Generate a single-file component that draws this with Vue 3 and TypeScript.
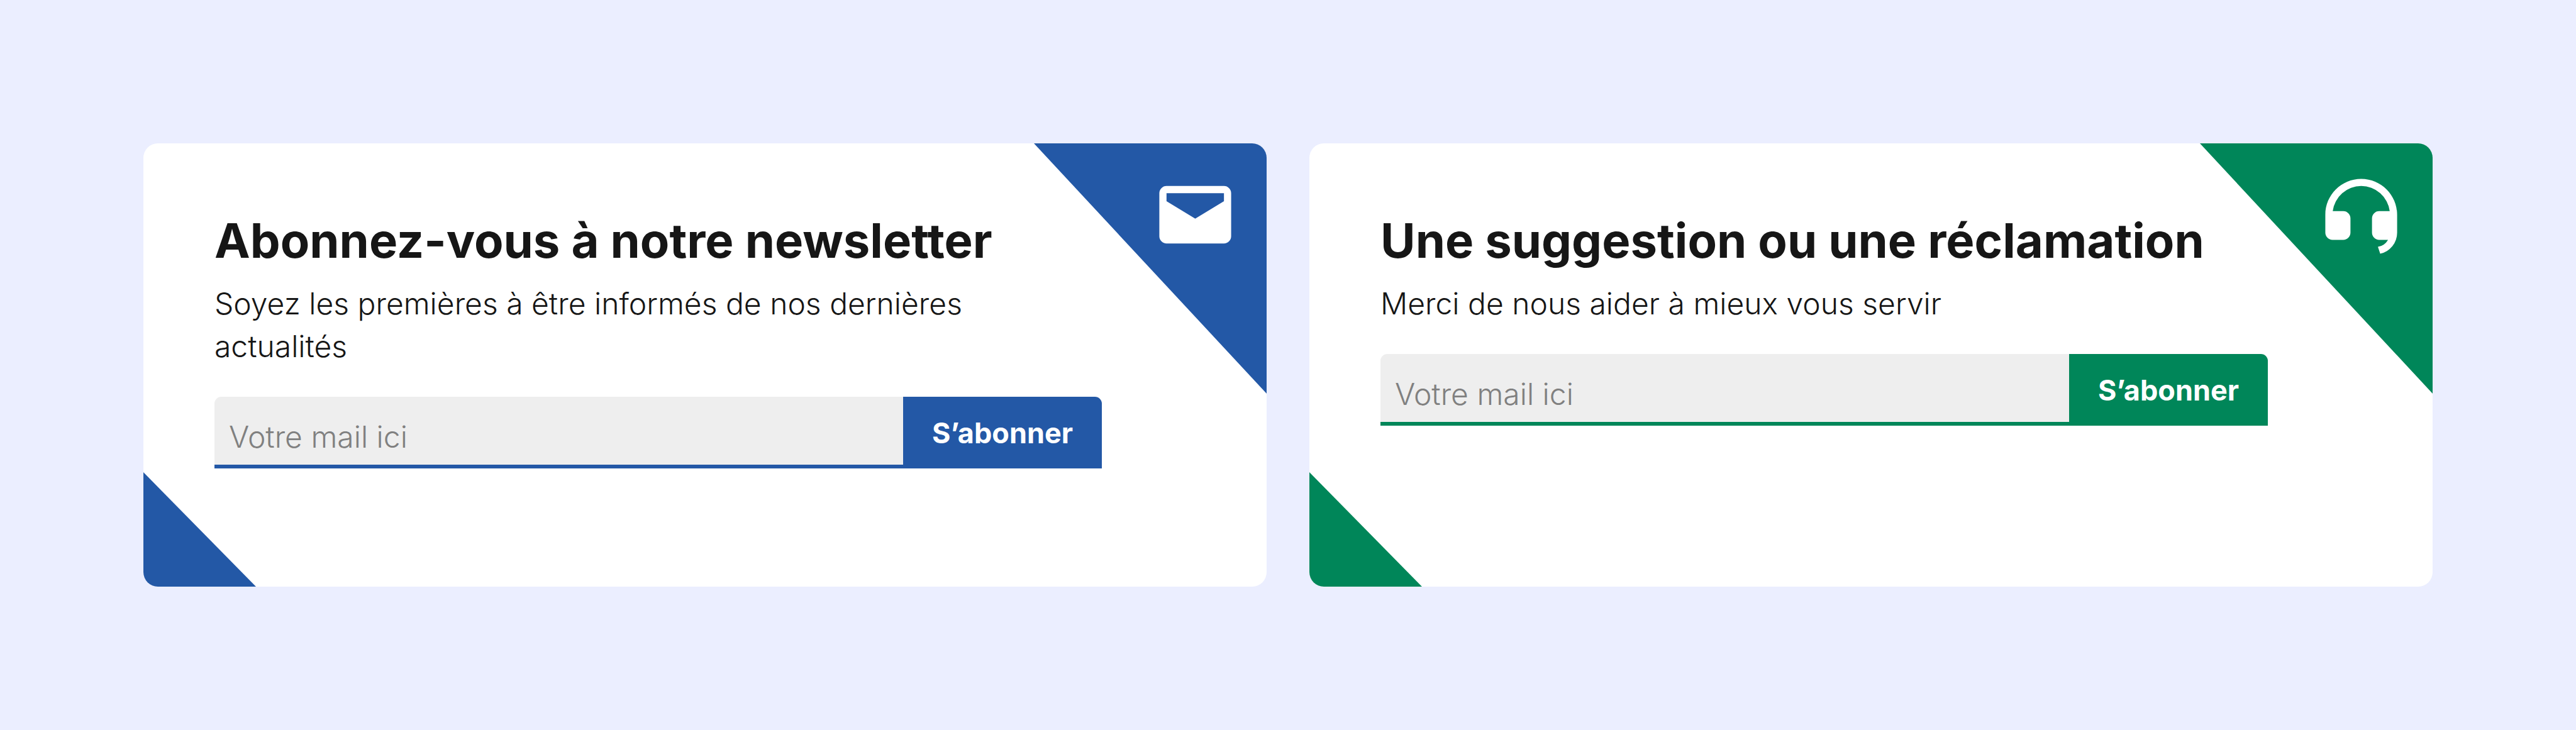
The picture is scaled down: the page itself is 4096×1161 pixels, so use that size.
<script setup lang="ts">
import { ref } from 'vue'

interface Panel {
  id: string
  title: string
  text: string
  icon: string
}

const panels: Panel[] = [
  {
    id: 'newsletter',
    title: 'Abonnez-vous à notre newsletter',
    text: 'Soyez les premières à être informés de nos dernières actualités',
    icon: 'M4 4h16a2 2 0 0 1 2 2v12a2 2 0 0 1-2 2H4a2 2 0 0 1-2-2V6a2 2 0 0 1 2-2zM4 6v2.24l8 4.86 8-4.86V6z',
  },
  {
    id: 'suggestion',
    title: 'Une suggestion ou une réclamation',
    text: 'Merci de nous aider à mieux vous servir',
    icon: 'M22 17.002a6.002 6.002 0 0 1-4.713 5.86l-.638-1.914A4.003 4.003 0 0 0 19.465 19H17a2 2 0 0 1-2-2v-4a2 2 0 0 1 2-2h2.938a8.001 8.001 0 0 0-15.876 0H7a2 2 0 0 1 2 2v4a2 2 0 0 1-2 2H4a2 2 0 0 1-2-2v-5C2 6.477 6.477 2 12 2s10 4.477 10 10v5.002z',
  },
]

const emails = ref<Record<string, string>>({ newsletter: '', suggestion: '' })
</script>

<template>
  <main class="page">
    <section v-for="panel in panels" :key="panel.id" class="card" :class="panel.id">
      <div class="corner corner-top"></div>
      <div class="corner corner-bottom"></div>
      <svg class="icon" viewBox="0 0 24 24" aria-hidden="true">
        <path fill="currentColor" fill-rule="evenodd" :d="panel.icon" />
      </svg>
      <h2 class="title">{{ panel.title }}</h2>
      <p class="text">{{ panel.text }}</p>
      <form class="form" @submit.prevent>
        <input
          v-model="emails[panel.id]"
          class="field"
          type="email"
          aria-label="Votre mail ici"
          placeholder="Votre mail ici"
        />
        <button class="submit" type="submit">S’abonner</button>
      </form>
    </section>
  </main>
</template>

<style>
body {
  margin: 0;
  background: #ebeeff;
}
</style>

<style scoped>
.page {
  display: grid;
  grid-template-columns: 1fr 1fr;
  gap: 68px;
  padding: 228px;
  font-family: Inter, "Open Sans", sans-serif;
  color: #161616;
}

.card {
  position: relative;
  box-sizing: border-box;
  padding: 108px 262px 188px 113px;
  border-radius: 23px;
  overflow: hidden;
  background: #fff;
}

.newsletter {
  --accent: #2358a6;
}

.suggestion {
  --accent: #008659;
}

.corner {
  position: absolute;
  background: var(--accent);
}

.corner-top {
  top: 0;
  right: 0;
  width: 370px;
  height: 398px;
  clip-path: polygon(0 0, 100% 0, 100% 100%);
}

.corner-bottom {
  bottom: 0;
  left: 0;
  width: 179px;
  height: 182px;
  clip-path: polygon(0 0, 100% 100%, 0 100%);
}

.icon {
  position: absolute;
  top: 45px;
  right: 45px;
  width: 137px;
  height: 137px;
  color: #fff;
}

.title {
  position: relative;
  margin: 0 0 21px;
  font-size: 76px;
  line-height: 92px;
  font-weight: 700;
  white-space: nowrap;
}

.text {
  max-width: 1280px;
  margin: 0 0 46px;
  font-size: 48px;
  line-height: 68px;
  font-weight: 350;
}

.form {
  display: flex;
}

.field {
  flex: 1;
  min-width: 0;
  box-sizing: border-box;
  height: 114px;
  padding: 18px 23px 0;
  border: 0;
  border-bottom: 6px solid var(--accent);
  border-radius: 11px 0 0 0;
  outline: 0;
  background: #eee;
  color: #161616;
  font-family: inherit;
  font-size: 48px;
  font-weight: 350;
}

.field::placeholder {
  color: #808080;
  opacity: 1;
}

.submit {
  width: 316px;
  padding: 0;
  border: 0;
  border-radius: 0 11px 0 0;
  background: var(--accent);
  color: #fff;
  font-family: inherit;
  font-size: 45px;
  font-weight: 700;
  cursor: pointer;
}
</style>
